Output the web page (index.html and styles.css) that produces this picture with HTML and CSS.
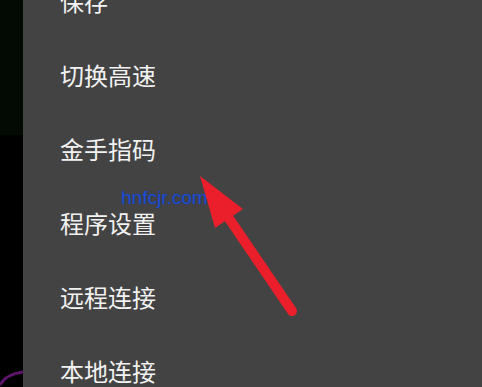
FILE: index.html
```html
<!DOCTYPE html>
<html lang="zh">
<head>
<meta charset="utf-8">
<link rel="stylesheet" href="styles.css">
</head>
<body>
<div class="screen">
  <div class="side">
    <div class="side-top"></div>
    <svg class="arc" width="23" height="40" viewBox="0 0 23 40"><path d="M0 38 Q6 27 23 25" fill="none" stroke="#5b1468" stroke-width="3"/></svg>
  </div>
  <div class="panel">
    <ul class="menu">
      <li class="item">保存</li>
      <li class="item">切换高速</li>
      <li class="item">金手指码</li>
      <li class="item">程序设置</li>
      <li class="item">远程连接</li>
      <li class="item">本地连接</li>
    </ul>
  </div>
  <div class="watermark">hnfcjr.com</div>
  <svg class="arrow" width="482" height="387" viewBox="0 0 482 387">
    <line x1="292" y1="311" x2="226" y2="214" stroke="#ea1f2b" stroke-width="10" stroke-linecap="round"/>
    <polygon points="200,176 215,228 243,209" fill="#ea1f2b"/>
  </svg>
</div>
</body>
</html>
```
FILE: styles.css
```css
html, body {
  margin: 0;
  padding: 0;
  background: #000;
}
.screen {
  position: relative;
  width: 482px;
  height: 387px;
  display: flex;
  overflow: hidden;
}
.side {
  width: 23px;
  flex: none;
  background: #000;
  display: flex;
  flex-direction: column;
  justify-content: space-between;
}
.side-top {
  height: 135px;
  background: #030a03;
}
.arc {
  display: block;
}
.panel {
  flex: 1;
  background: #434343;
  overflow: hidden;
}
.menu {
  list-style: none;
  margin: -37px 0 0 0;
  padding: 0;
}
.item {
  height: 74px;
  display: flex;
  align-items: center;
  padding-left: 37px;
  font-family: "Noto Sans CJK SC", sans-serif;
  font-size: 24px;
  color: #f2f2f2;
}
.watermark {
  position: absolute;
  left: 121px;
  top: 187px;
  font-family: "Liberation Sans", sans-serif;
  font-size: 19px;
  color: #2350d0;
  text-shadow: 0 0 1px #0a2a80;
}
.arrow {
  position: absolute;
  left: 0;
  top: 0;
}
```
